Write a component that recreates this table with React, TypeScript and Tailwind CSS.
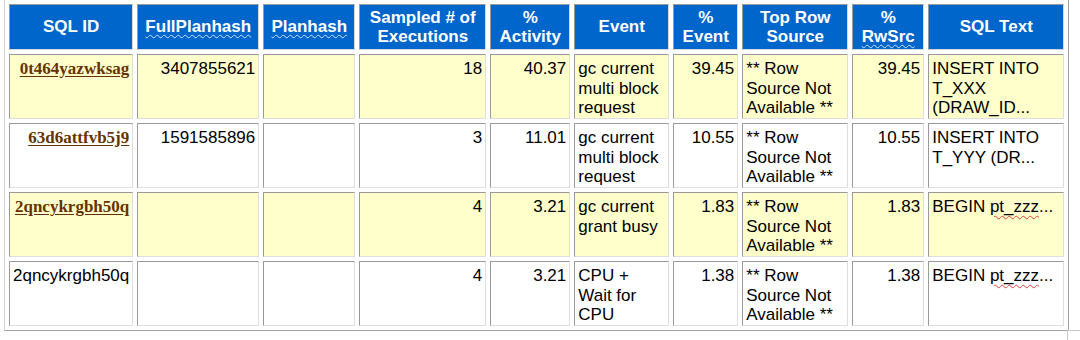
import React from "react";

type Row = {
  id: string;
  link: boolean;
  full: string;
  plan: string;
  exec: string;
  act: string;
  event: string;
  pev: string;
  src: string;
  prw: string;
  sql: React.ReactNode;
  yellow: boolean;
};

const Zzz = () => (
  <>
    BEGIN <span className="underline decoration-wavy decoration-[#e04040] decoration-1 underline-offset-[3px]">pt_zzz</span>...
  </>
);

const rows: Row[] = [
  {
    id: "0t464yazwksag",
    link: true,
    full: "3407855621",
    plan: "",
    exec: "18",
    act: "40.37",
    event: "gc current multi block request",
    pev: "39.45",
    src: "** Row Source Not Available **",
    prw: "39.45",
    sql: "INSERT INTO T_XXX (DRAW_ID...",
    yellow: true,
  },
  {
    id: "63d6attfvb5j9",
    link: true,
    full: "1591585896",
    plan: "",
    exec: "3",
    act: "11.01",
    event: "gc current multi block request",
    pev: "10.55",
    src: "** Row Source Not Available **",
    prw: "10.55",
    sql: "INSERT INTO T_YYY (DR...",
    yellow: false,
  },
  {
    id: "2qncykrgbh50q",
    link: true,
    full: "",
    plan: "",
    exec: "4",
    act: "3.21",
    event: "gc current grant busy",
    pev: "1.83",
    src: "** Row Source Not Available **",
    prw: "1.83",
    sql: <Zzz />,
    yellow: true,
  },
  {
    id: "2qncykrgbh50q",
    link: false,
    full: "",
    plan: "",
    exec: "4",
    act: "3.21",
    event: "CPU + Wait for CPU",
    pev: "1.38",
    src: "** Row Source Not Available **",
    prw: "1.38",
    sql: <Zzz />,
    yellow: false,
  },
];

const th =
  "bg-[#0066cc] text-white font-bold text-center align-middle px-[2px] pt-[2px] pb-[2px] border border-t-[#9a9a9a] border-l-[#9a9a9a] border-r-[#d8d8d8] border-b-[#d8d8d8]";
const tdBase =
  "align-top px-[3px] pt-[4px] pb-0 border border-t-[#9a9a9a] border-l-[#9a9a9a] border-r-[#dedede] border-b-[#dedede]";

const Wavy = ({ children }: { children: React.ReactNode }) => (
  <span className="underline decoration-wavy decoration-[#cfe0f5] decoration-1 underline-offset-[2px]">
    {children}
  </span>
);

export default function App() {
  return (
    <div className="bg-white w-[1080px] h-[340px] overflow-hidden">
      <table
        className="ml-[4px] mt-[-1px] table-fixed border-separate border-spacing-[4px] border border-t-[#d4d4d4] border-l-[#d4d4d4] border-r-[#a0a0a0] border-b-[#a0a0a0] text-[17px] leading-[19.5px] text-black"
        style={{ fontFamily: '"Liberation Sans", Arial, sans-serif' }}
      >
        <colgroup>
          <col className="w-[123px]" />
          <col className="w-[122px]" />
          <col className="w-[92px]" />
          <col className="w-[127px]" />
          <col className="w-[80px]" />
          <col className="w-[95px]" />
          <col className="w-[65px]" />
          <col className="w-[106px]" />
          <col className="w-[72px]" />
          <col className="w-[136px]" />
        </colgroup>
        <thead>
          <tr className="h-[46px]">
            <th className={th}>SQL ID</th>
            <th className={th}>
              <Wavy>FullPlanhash</Wavy>
            </th>
            <th className={th}>
              <Wavy>Planhash</Wavy>
            </th>
            <th className={th}>
              Sampled # of
              <br />
              Executions
            </th>
            <th className={th}>
              %<br />
              Activity
            </th>
            <th className={th}>Event</th>
            <th className={th}>
              %<br />
              Event
            </th>
            <th className={th}>
              Top Row
              <br />
              Source
            </th>
            <th className={th}>
              %<br />
              <Wavy>RwSrc</Wavy>
            </th>
            <th className={th}>SQL Text</th>
          </tr>
        </thead>
        <tbody>
          {rows.map((r, i) => {
            const bg = r.yellow ? "bg-[#ffffcc]" : "bg-white";
            const td = `${tdBase} ${bg}`;
            return (
              <tr key={i} className="h-[65px]">
                <td className={`${td} text-right`}>
                  {r.link ? (
                    <a
                      className="font-bold underline text-[#663300] underline-offset-[2px]"
                      style={{ fontFamily: '"Liberation Serif", "Times New Roman", serif' }}
                    >
                      {r.id}
                    </a>
                  ) : (
                    r.id
                  )}
                </td>
                <td className={`${td} text-right`}>{r.full}</td>
                <td className={`${td} text-right`}>{r.plan}</td>
                <td className={`${td} text-right`}>{r.exec}</td>
                <td className={`${td} text-right`}>{r.act}</td>
                <td className={`${td} text-left`}>{r.event}</td>
                <td className={`${td} text-right`}>{r.pev}</td>
                <td className={`${td} text-left`}>{r.src}</td>
                <td className={`${td} text-right`}>{r.prw}</td>
                <td className={`${td} text-left`}>{r.sql}</td>
              </tr>
            );
          })}
        </tbody>
      </table>
      <div className="ml-[1067px] mt-[-1px] h-[12px] w-[13px] border-l border-t border-[#c8c8c8]" />
    </div>
  );
}
